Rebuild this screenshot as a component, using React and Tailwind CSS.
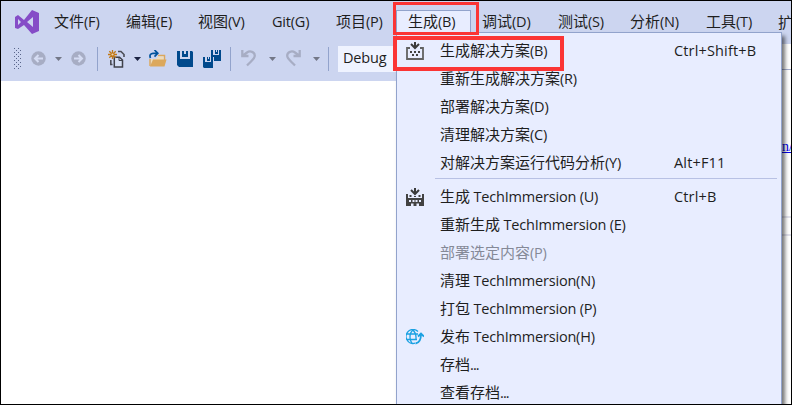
import React from "react";

const CJK = /([\u4e00-\u9fff]+)/;

function latinTracking(part, wide) {
  if (part === "...") return "tracking-[-0.9px]";
  return wide ? "tracking-[0.15px]" : "tracking-[-0.2px]";
}

function Label({ text, wide }) {
  return (
    <span className="flex items-baseline whitespace-pre font-['Open_Sans','Noto_Sans_CJK_SC',sans-serif]">
      {text.split(CJK).filter(Boolean).map((part, i) =>
        CJK.test(part) ? (
          <span key={i} className="font-['Noto_Sans_CJK_SC',sans-serif] text-[15px] leading-5">{part}</span>
        ) : (
          <span key={i} className={`text-[14.5px] leading-5 ${latinTracking(part, wide)}`}>{part}</span>
        )
      )}
    </span>
  );
}

function VsLogo() {
  return (
    <svg width="24" height="24" viewBox="0 0 24 24" className="block">
      <path fill="#854cc7" fillRule="evenodd" d="M0 7L3 5L9 10L17 0L24 3V21L17 24L9 15L3 19L0 18ZM3 9V15L6 12ZM12 12L18 17V7Z" />
    </svg>
  );
}

function NavCircle({ flip }) {
  return (
    <svg width="15" height="15" viewBox="0 0 15 15" className={flip ? "block -scale-x-100" : "block"}>
      <circle cx="7.5" cy="7.5" r="7.2" fill="#a7adc4" />
      <path d="M12 7.5H4M7.5 4L4 7.5L7.5 11" fill="none" stroke="#d5dcf3" strokeWidth="2" />
    </svg>
  );
}

function Caret({ dark }) {
  return (
    <svg width="7" height="4" viewBox="0 0 7 4" className="block">
      <path d="M0 0H7L3.5 4Z" fill={dark ? "#1b2342" : "#737787"} />
    </svg>
  );
}

function Grip() {
  return (
    <svg width="7" height="22" viewBox="0 0 7 22" className="block" fill="#59658a">
      {[0, 4, 8, 12, 16, 20].map((y) => (
        <g key={y}>
          <rect x="0" y={y} width="1" height="1" />
          <rect x="4" y={y} width="1" height="1" />
          <rect x="2" y={y + 2} width="1" height="1" opacity={y === 20 ? 0 : 1} />
          <rect x="6" y={y + 2} width="1" height="1" opacity={y === 20 ? 0 : 1} />
        </g>
      ))}
    </svg>
  );
}

function NewProjectIcon() {
  return (
    <svg width="18" height="18" viewBox="0 0 18 18" className="block">
      <path d="M10 1.5H13L16 4.5V7M2.8 10V14.5H4.5" fill="none" stroke="#4c4e57" strokeWidth="1.6" />
      <path d="M6.3 7.3H11.5L14.5 10V17H6.3Z" fill="#d6dff5" stroke="#3f414a" strokeWidth="1.5" />
      <path d="M11 7V10.5H15" fill="none" stroke="#3f414a" />
      <path d="M4.5 0V9M0 4.5H9M1.3 1.3L7.7 7.7M7.7 1.3L1.3 7.7" stroke="#c17816" strokeWidth="1.3" />
      <circle cx="4.5" cy="4.5" r="1.1" fill="#ead6b5" />
    </svg>
  );
}

function OpenIcon() {
  return (
    <svg width="18" height="17" viewBox="0 0 18 17" className="block">
      <path d="M9 5.5H15.5V10M1 9V16" fill="none" stroke="#dca85c" strokeWidth="1.5" />
      <path d="M2 9H7L9 6.5H14.5V10H4L2 15Z" fill="#f0dcb8" />
      <path d="M4 9.5H17.5L15.5 16.5H1Z" fill="#dca85c" />
      <path d="M1.5 8C0 5 2 3.3 4 3.3H8M5.5 0L8.8 3.3L5.5 6.6" fill="none" stroke="#00539c" strokeWidth="1.7" />
    </svg>
  );
}

function SaveIcon() {
  return (
    <svg width="16" height="16" viewBox="0 0 16 16" className="block">
      <path d="M0 0H3V8H13V0H15L16 1V16H2L0 14Z" fill="#00498c" />
      <path fillRule="evenodd" d="M5 0H11V6H5ZM7 0V3H9V0Z" fill="#00498c" />
    </svg>
  );
}

function SaveAllIcon() {
  return (
    <svg width="18" height="18" viewBox="0 0 18 18" className="block">
      <path d="M8 0H10V5H16V0H18V11H11V7H8Z" fill="#00498c" />
      <path d="M12 0H15V4H12Z" fill="#00498c" />
      <path d="M0 7H2V12H8V7H10V18H1L0 17Z" fill="#00498c" />
      <path d="M4 7H7V11H4Z" fill="#00498c" />
      <path d="M13 0H14V2H13ZM5 7H6V9H5Z" fill="#ccd5f0" />
    </svg>
  );
}

function UndoIcon({ flip }) {
  return (
    <svg width="16" height="17" viewBox="0 0 16 17" className={flip ? "block -scale-x-100" : "block"}>
      <path d="M1.3 0V6H7.5M2 5.5L6 2.5C9 .3 13.8 1.8 13.8 5.8C13.8 8.5 12 9.5 6 15.5" fill="none" stroke="#a7adc4" strokeWidth="2.3" />
    </svg>
  );
}

function BuildIcon({ solid }) {
  return (
    <svg width="18" height="18" viewBox="0 0 18 18" className="block">
      <path d="M9 0V5.5M5 2L9 6L13 2" fill="none" stroke="#3b3b3b" strokeWidth="2" />
      {solid ? (
        <path fill="#424242" fillRule="evenodd" d="M0 6H2V10H16V6H18V18H0ZM3 12V14H5V12ZM6.5 12V14H8.5V12ZM9.5 12V14H11.5V12ZM13 12V14H15V12ZM5 15.5V18H7.5V15.5ZM10.5 15.5V18H13V15.5ZM3.5 7H5.5V9H3.5ZM8 8H10V9H8ZM12.5 7H14.5V9H12.5Z" />
      ) : (
        <g>
          <path d="M4 6H1V17H17V6H14" fill="none" stroke="#626262" strokeWidth="1.8" />
          <path fill="#424242" d="M4 9H6V11H4ZM8 9H10V11H8ZM12 9H14V11H12ZM6 12H8V14H6ZM10 12H12V14H10Z" />
        </g>
      )}
    </svg>
  );
}

function PublishIcon() {
  return (
    <svg width="18" height="16" viewBox="0 0 18 16" className="block" fill="none" stroke="#1ba1e2" strokeWidth="1.3">
      <path d="M12 2.5A7 7 0 1 0 9 14.2M1 5H12M1 10.5H11M7 1C3 4 3 12 7 15M7 1C10 4 10.5 7 9.8 11" />
      <path d="M9.5 14.5C13 14 15 11 15 5M12 7.5L15 4.5L18 7.5" strokeWidth="1.8" />
    </svg>
  );
}

const leftMenus = [
  ["文件(F)", "w-[72px]"],
  ["编辑(E)", "w-[72px]"],
  ["视图(V)", "w-[74px]"],
  ["Git(G)", "w-[64px]"],
  ["项目(P)", "w-[60px]"],
];

const rightMenus = [
  ["调试(D)", "w-[76px]"],
  ["测试(S)", "w-[72px]"],
  ["分析(N)", "w-[76px]"],
  ["工具(T)", "w-[72px]"],
  ["扩", "w-[13px]"],
];

const solutionItems = [
  { text: "生成解决方案(B)", keys: "Ctrl+Shift+B", icon: <BuildIcon /> },
  { text: "重新生成解决方案(R)" },
  { text: "部署解决方案(D)" },
  { text: "清理解决方案(C)" },
  { text: "对解决方案运行代码分析(Y)", keys: "Alt+F11" },
];

const projectItems = [
  { text: "生成 TechImmersion (U)", keys: "Ctrl+B", icon: <BuildIcon solid /> },
  { text: "重新生成 TechImmersion (E)" },
  { text: "部署选定内容(P)", disabled: true },
  { text: "清理 TechImmersion(N)" },
  { text: "打包 TechImmersion (P)" },
  { text: "发布 TechImmersion(H)", icon: <PublishIcon /> },
  { text: "存档..." },
  { text: "查看存档..." },
];

function MenuRow({ text, keys, icon, disabled }) {
  return (
    <div className={`flex h-7 items-center pl-[9px] ${disabled ? "text-[#858997]" : "text-[#1e1e1e]"}`}>
      <div className="w-[34px]">{icon}</div>
      <div className="w-[234px] pb-0.5"><Label text={text} /></div>
      {keys && <Label text={keys} wide />}
    </div>
  );
}

export default function App() {
  return (
    <div className="relative h-[405px] w-[792px] overflow-hidden border border-black bg-white text-[#1e1e1e]">
      <header className="flex h-20 flex-col bg-[#ccd5f0]">
        <nav className="flex h-[42px] items-center">
          <div className="w-[53px] shrink-0 pl-[14px]"><VsLogo /></div>
          {leftMenus.map(([text, width]) => (
            <div key={text} className={`shrink-0 pb-px ${width}`}><Label text={text} /></div>
          ))}
          <div className="mr-[11px] flex h-[24px] w-[75px] shrink-0 items-center border border-[#92a3cc] bg-[#e8edff] pb-px pl-[11px]">
            <Label text="生成(B)" />
          </div>
          {rightMenus.map(([text, width]) => (
            <div key={text} className={`shrink-0 pb-px ${width}`}><Label text={text} /></div>
          ))}
        </nav>
        <div className="flex h-[31px] items-center">
          <div className="w-[30px] pl-[13px]"><Grip /></div>
          <div className="w-6"><NavCircle /></div>
          <div className="w-4"><Caret /></div>
          <div className="w-[26px]"><NavCircle flip /></div>
          <div className="h-6 w-px bg-[#92a3cc]" />
          <div className="ml-2.5 w-[26px]"><NewProjectIcon /></div>
          <div className="w-[15px]"><Caret dark /></div>
          <div className="w-7"><OpenIcon /></div>
          <div className="w-[26px]"><SaveIcon /></div>
          <div className="w-[27px]"><SaveAllIcon /></div>
          <div className="h-6 w-px bg-[#92a3cc]" />
          <div className="ml-2.5 w-7"><UndoIcon /></div>
          <div className="w-4"><Caret /></div>
          <div className="w-[28px]"><UndoIcon flip /></div>
          <div className="w-[15px]"><Caret /></div>
          <div className="h-6 w-px bg-[#92a3cc]" />
          <div className="ml-[9px] flex h-[26px] w-20 items-center bg-[#eff3ff] pb-0.5 pl-[5px]"><Label text="Debug" /></div>
        </div>
      </header>

      {/* Tool panel showing to the right of the open menu */}
      <aside className="absolute left-[775px] top-[43px] flex h-[361px] w-4 flex-col bg-white">
        <div className="h-[26px] border-b border-[#a6afd0]" />
        <div className="h-[69px]" />
        <a className="pl-[6px] font-['Liberation_Serif',serif] text-[14px] leading-4 whitespace-nowrap text-[#0000ee] underline">n/</a>
        <div className="mt-[61px] h-[20px] border-y-2 border-[#e2e2ec]" />
      </aside>

      {/* Open menu */}
      <div className="absolute left-[395px] top-[31px] h-[380px] w-[386px] border border-[#92a3cc] bg-[#e8edff] pt-1 shadow-[3px_4px_4px_rgba(0,0,0,0.55)]">
        {solutionItems.map((item) => <MenuRow key={item.text} {...item} />)}
        <div className="ml-[38px] mr-1 h-1.5 pt-px"><div className="h-px bg-[#b8c1e4]" /></div>
        {projectItems.map((item) => <MenuRow key={item.text} {...item} />)}
      </div>
      <div className="absolute left-[396px] top-[31px] h-px w-[73px] bg-[#e8edff]" />

      {/* Highlight frames */}
      <div className="absolute left-[392px] top-px h-[33px] w-[86px] border-3 border-[#fb3535]" />
      <div className="absolute left-[392px] top-[35px] h-[35px] w-[171px] border-4 border-[#fb3535]" />
    </div>
  );
}
